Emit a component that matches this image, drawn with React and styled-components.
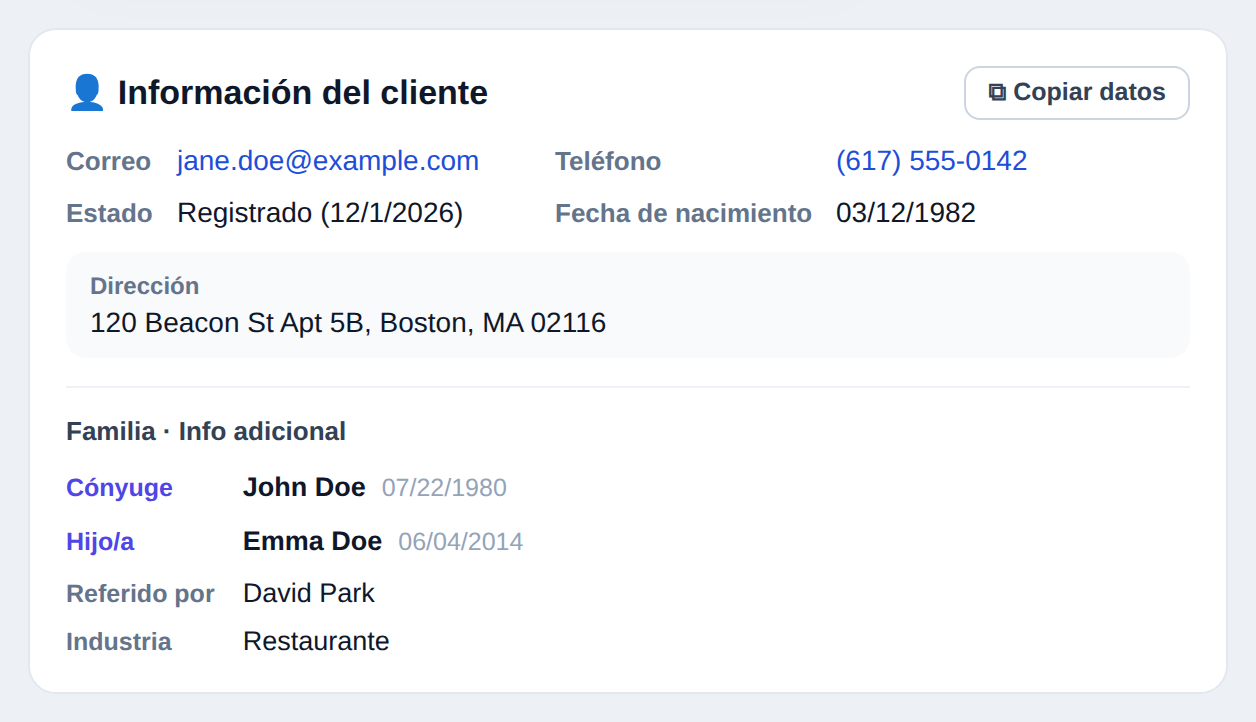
import React from "react";
import styled, { createGlobalStyle } from "styled-components";

const GlobalStyle = createGlobalStyle`
  * { box-sizing: border-box; }
  body {
    margin: 0;
    background: #edf1f6;
    font-family: "Liberation Sans", Arial, sans-serif;
    color: #0f172a;
    text-rendering: geometricPrecision;
  }
`;

const Page = styled.main`
  position: relative;
  height: 722px;
  padding: 28px;
  overflow: hidden;

  /* soft shadow falling from the panel above */
  &::before {
    content: "";
    position: absolute;
    left: 68px;
    top: -100px;
    width: 800px;
    height: 90px;
    border-radius: 28px;
    box-shadow: 0 0 60px rgba(15, 23, 42, 0.025);
  }
`;

const Card = styled.section`
  position: relative;
  height: 666px;
  padding: 36px;
  background: #fff;
  border: 2px solid #e2e8f0;
  border-radius: 28px;
`;

const Header = styled.header`
  display: flex;
  align-items: center;
  justify-content: space-between;
  height: 54px;
`;

const Title = styled.h2`
  margin: 0;
  font-size: 34px;
  line-height: 40px;
`;

const CopyButton = styled.button`
  height: 54px;
  padding: 0 22px 1px;
  border: 2px solid #cbd5e1;
  border-radius: 16px;
  background: #fff;
  color: #334155;
  font: 700 25px "Liberation Sans", Arial, sans-serif;
  text-rendering: inherit;
`;

const Details = styled.dl`
  display: grid;
  grid-template-columns: 111px 378px 281px 1fr;
  row-gap: 16px;
  margin: 23px 0 0;
  align-items: baseline;
`;

const Label = styled.dt`
  color: #64748b;
  font-size: 26px;
  font-weight: 700;
  line-height: 36px;
`;

const Value = styled.dd`
  margin: 0;
  font-size: 28px;
  line-height: 36px;
  color: ${(p) => (p.$link ? "#1d4ed8" : "#0f172a")};
`;

const Address = styled.div`
  height: 106px;
  margin-top: 21px;
  padding: 19px 24px;
  background: #f8fafc;
  border-radius: 20px;
`;

const AddressLabel = styled.div`
  color: #64748b;
  font-size: 24px;
  font-weight: 700;
  line-height: 32px;
`;

const AddressText = styled.div`
  margin-top: 2px;
  font-size: 28px;
  line-height: 36px;
`;

const Family = styled.section`
  margin-top: 28px;
  padding-top: 27px;
  border-top: 2px solid #eef2f6;
`;

const Subtitle = styled.h3`
  margin: 0 0 13px;
  color: #334155;
  font-size: 26px;
  line-height: 32px;
`;

const People = styled.div`
  margin-bottom: 1px;
`;

const Row = styled.div`
  display: grid;
  grid-template-columns: 176.7px 1fr;
  align-items: baseline;
  height: ${(p) => p.$height}px;
  line-height: ${(p) => p.$height}px;
`;

const RowLabel = styled.span`
  color: ${(p) => (p.$accent ? "#4f46e5" : "#64748b")};
  font-size: 25px;
  font-weight: 700;
`;

const RowValue = styled.span`
  font-size: 27px;
`;

const Name = styled.strong`
  margin-right: 16px;
`;

const BirthDate = styled.span`
  color: #94a3b8;
  font-size: 25px;
`;

export default function App() {
  return (
    <>
      <GlobalStyle />
      <Page>
        <Card>
          <Header>
            <Title>👤 Información del cliente</Title>
            <CopyButton>⧉ Copiar datos</CopyButton>
          </Header>
          <Details>
            <Label>Correo</Label>
            <Value $link>jane.doe@example.com</Value>
            <Label>Teléfono</Label>
            <Value $link>(617) 555-0142</Value>
            <Label>Estado</Label>
            <Value>Registrado (12/1/2026)</Value>
            <Label>Fecha de nacimiento</Label>
            <Value>03/12/1982</Value>
          </Details>
          <Address>
            <AddressLabel>Dirección</AddressLabel>
            <AddressText>120 Beacon St Apt 5B, Boston, MA 02116</AddressText>
          </Address>
          <Family>
            <Subtitle>Familia · Info adicional</Subtitle>
            <People>
              <Row $height={54}><RowLabel $accent>Cónyuge</RowLabel><RowValue><Name>John Doe</Name><BirthDate>07/22/1980</BirthDate></RowValue></Row>
              <Row $height={54}><RowLabel $accent>Hijo/a</RowLabel><RowValue><Name>Emma Doe</Name><BirthDate>06/04/2014</BirthDate></RowValue></Row>
            </People>
            <Row $height={48}><RowLabel>Referido por</RowLabel><RowValue>David Park</RowValue></Row>
            <Row $height={48}><RowLabel>Industria</RowLabel><RowValue>Restaurante</RowValue></Row>
          </Family>
        </Card>
      </Page>
    </>
  );
}
